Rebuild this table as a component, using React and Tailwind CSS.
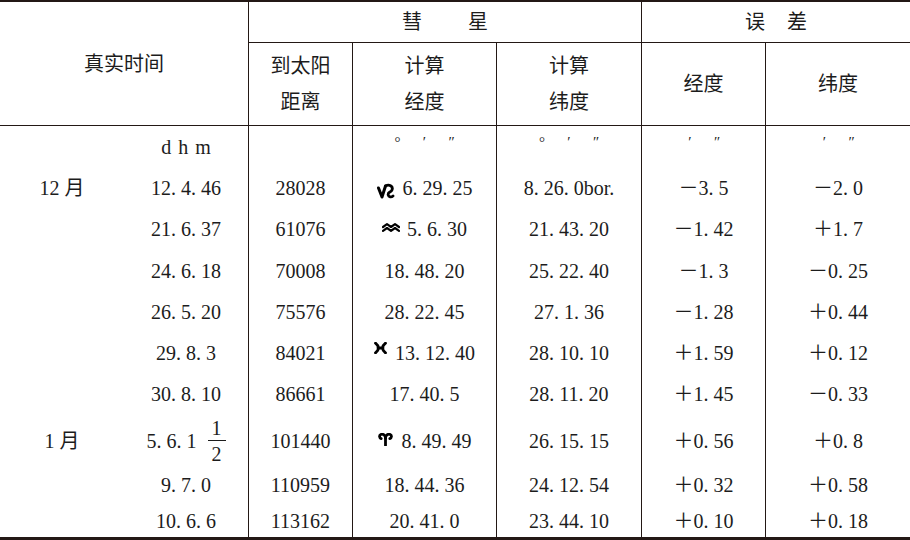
import React from "react";

const stroke = {
  fill: "none",
  stroke: "#000",
  strokeLinecap: "round",
  strokeLinejoin: "round",
};

function Capricorn() {
  return (
    <svg width="18" height="16" viewBox="0 0 18 16" className="mr-[8px] mt-[6px]">
      <path d="M1.5 5 L5 14 L8.5 3" {...stroke} strokeWidth="3" />
      <path d="M8.5 3 C12 1 16.5 3 15 7 C14 9.5 10.5 9 11.2 12 C11.7 14 14.3 14.5 16 13" {...stroke} strokeWidth="2.8" />
    </svg>
  );
}

function Aquarius() {
  return (
    <svg width="18" height="9" viewBox="0 0 18 9" className="mr-[7px] -mt-[3px]">
      <path d="M1 4 L5 1.2 L9 4 L13 1.2 L17 4" {...stroke} strokeWidth="2.2" />
      <path d="M1 7.8 L5 5 L9 7.8 L13 5 L17 7.8" {...stroke} strokeWidth="2.2" />
    </svg>
  );
}

function Pisces() {
  return (
    <svg width="13" height="12" viewBox="0 0 13 12" className="mr-[8px] -mt-[9px]">
      <path d="M1.5 1.2 Q7.5 6 1.5 10.8" {...stroke} strokeWidth="2.8" />
      <path d="M11.5 1.2 Q5.5 6 11.5 10.8" {...stroke} strokeWidth="2.8" />
      <path d="M4 6 L9 6" {...stroke} strokeWidth="2.8" />
    </svg>
  );
}

function Aries() {
  return (
    <svg width="15" height="13" viewBox="0 0 15 13" className="mr-[9px] -mt-[2px]">
      <path d="M7.5 12.5 L7.5 5" {...stroke} strokeWidth="2.8" />
      <path d="M7.5 5 C7.5 1.8 4.5 0.6 2.8 1.5 C1 2.4 1.2 5 3.2 5.6" {...stroke} strokeWidth="2.8" />
      <path d="M7.5 5 C7.5 1.8 10.5 0.6 12.2 1.5 C14 2.4 13.8 5 11.8 5.6" {...stroke} strokeWidth="2.8" />
    </svg>
  );
}

const rows = [
  { m: "12 月", t: "12.4.46", d: "28028", Sym: Capricorn, lon: "6.29.25", lat: "8.26.0bor.", el: "－3.5", eb: "－2.0" },
  { t: "21.6.37", d: "61076", Sym: Aquarius, lon: "5.6.30", lat: "21.43.20", el: "－1.42", eb: "＋1.7" },
  { t: "24.6.18", d: "70008", lon: "18.48.20", lat: "25.22.40", el: "－1.3", eb: "－0.25" },
  { t: "26.5.20", d: "75576", lon: "28.22.45", lat: "27.1.36", el: "－1.28", eb: "＋0.44" },
  { t: "29.8.3", d: "84021", Sym: Pisces, lon: "13.12.40", lat: "28.10.10", el: "＋1.59", eb: "＋0.12" },
  { t: "30.8.10", d: "86661", lon: "17.40.5", lat: "28.11.20", el: "＋1.45", eb: "－0.33" },
  { m: "1 月", t: "5.6.1", frac: true, d: "101440", Sym: Aries, lon: "8.49.49", lat: "26.15.15", el: "＋0.56", eb: "＋0.8" },
  { t: "9.7.0", d: "110959", lon: "18.44.36", lat: "24.12.54", el: "＋0.32", eb: "＋0.58" },
  { t: "10.6.6", d: "113162", lon: "20.41.0", lat: "23.44.10", el: "＋0.10", eb: "＋0.18" },
];

const fmt = (s) => s.replace(/\.(?=\d)/g, ". ");

const cell = "flex items-center justify-center whitespace-pre";
const bl = "border-l border-[#231815]";

function Sign({ v }) {
  const sign = v[0];
  const rest = v.slice(1);
  return (
    <span className="flex items-center">
      <span className="w-[20px] text-center">{sign}</span>
      <span>{fmt(rest)}</span>
    </span>
  );
}

function Units({ items }) {
  return (
    <div className={`${cell} ${bl}`}>
      <div className="flex mb-[9px] text-[15px] leading-none">
        {items.map((c, i) => (
          <span key={i} className="w-[27px] text-center">{c}</span>
        ))}
      </div>
    </div>
  );
}

export default function App() {
  return (
    <div
      className="w-[910px] h-[540px] bg-white text-[#1c1c1c] text-[20px] border-t-2 border-b-[3px] border-[#231815]"
      style={{ fontFamily: '"Liberation Serif", "Noto Sans CJK SC", serif' }}
    >
      <div className="grid grid-cols-[124px_124px_104px_144px_145px_124px_145px] grid-rows-[41px_83px_41px_41px_42px_41px_41px_41px_42px_51px_38px_33px] leading-none">
        {/* header */}
        <div className={`${cell} col-span-2 row-span-2 border-b border-[#231815]`}>真实时间</div>
        <div className={`${cell} col-span-3 ${bl} border-b gap-[46px]`}>
          <span>彗</span>
          <span>星</span>
        </div>
        <div className={`${cell} col-span-2 ${bl} border-b gap-[22px]`}>
          <span>误</span>
          <span>差</span>
        </div>
        <div className={`${bl} border-b flex flex-col items-center justify-center leading-[36px]`}>
          <span>到太阳</span>
          <span>距离</span>
        </div>
        <div className={`${bl} border-b flex flex-col items-center justify-center leading-[36px]`}>
          <span>计算</span>
          <span>经度</span>
        </div>
        <div className={`${bl} border-b flex flex-col items-center justify-center leading-[36px]`}>
          <span>计算</span>
          <span>纬度</span>
        </div>
        <div className={`${cell} ${bl} border-b`}>经度</div>
        <div className={`${cell} ${bl} border-b`}>纬度</div>

        {/* units row */}
        <div />
        <div className={`${cell} gap-[7px]`}>
          <span>d</span>
          <span>h</span>
          <span>m</span>
        </div>
        <div className={`${cell} ${bl}`} />
        <Units items={["°", "′", "″"]} />
        <Units items={["°", "′", "″"]} />
        <Units items={["′", "″"]} />
        <Units items={["′", "″"]} />

        {rows.map((r, i) => (
          <React.Fragment key={i}>
            <div className={cell}>{r.m || ""}</div>
            <div className={cell}>
              <span>{fmt(r.t)}</span>
              {r.frac && (
                <span className="ml-[11px] flex flex-col items-center">
                  <span className="pb-[2px]">1</span>
                  <span className="w-[18px] border-t border-[#1c1c1c]" />
                  <span className="pt-[3px]">2</span>
                </span>
              )}
            </div>
            <div className={`${cell} ${bl}`}>{r.d}</div>
            <div className={`${cell} ${bl}`}>
              {r.Sym && <r.Sym />}
              <span>{fmt(r.lon)}</span>
            </div>
            <div className={`${cell} ${bl}`}>{fmt(r.lat)}</div>
            <div className={`${cell} ${bl}`}>
              <Sign v={r.el} />
            </div>
            <div className={`${cell} ${bl}`}>
              <Sign v={r.eb} />
            </div>
          </React.Fragment>
        ))}
      </div>
    </div>
  );
}
